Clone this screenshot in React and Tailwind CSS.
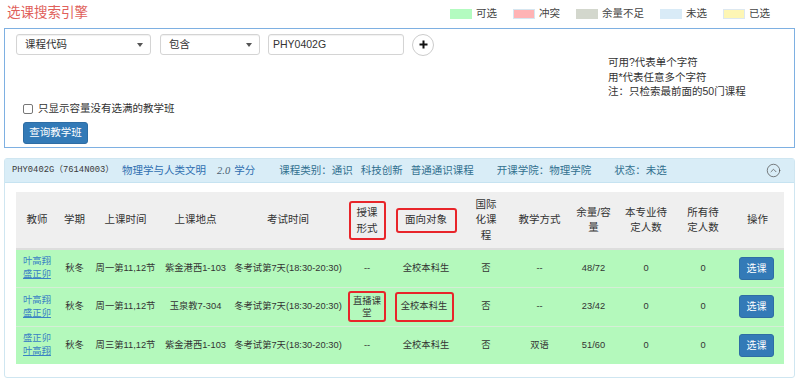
import React from "react";
import { CircleChevronUp } from "lucide-react";

const font = "font-['Liberation_Sans','Noto_Sans_CJK_SC',sans-serif]";

function Caret() {
  return (
    <svg width="6" height="4" viewBox="0 0 6 4" className="ml-auto">
      <path d="M0 0 L6 0 L3 4 Z" fill="#555" />
    </svg>
  );
}

function Legend({ color, label, first }) {
  return (
    <div className={`flex items-center ${first ? "" : "ml-[16px]"}`}>
      <span className={`w-[22px] h-[10px] ${color}`} />
      <span className="ml-[4px] text-[10.5px] text-[#444]">{label}</span>
    </div>
  );
}

const cols = [42, 33, 69, 71, 114, 44, 74, 46, 61, 47, 58, 56, 53];

function RedBox({ children, className }) {
  return (
    <div className={`inline-flex items-center justify-center border-2 border-[#e8252a] rounded-[3px] ${className}`}>
      {children}
    </div>
  );
}

const rows = [
  { t: ["叶高翔", "盛正卯"], time: "周一第11,12节", place: "紫金港西1-103", form: "--", method: "--", cap: "48/72" },
  { t: ["叶高翔", "盛正卯"], time: "周一第11,12节", place: "玉泉教7-304", form: "live", method: "--", cap: "23/42" },
  { t: ["盛正卯", "叶高翔"], time: "周三第11,12节", place: "紫金港西1-103", form: "--", method: "双语", cap: "51/60" },
];

export default function App() {
  return (
    <div className={`w-[799px] h-[383px] bg-white overflow-hidden text-[#333] ${font}`}>
      {/* top bar */}
      <div className="h-[28px] flex items-center">
        <div className="pl-[7px] text-[13.5px] text-[#e0605a] leading-none -mt-[3px]">选课搜索引擎</div>
        <div className="ml-auto pr-[29px] flex items-center">
          <Legend first color="bg-[#b3fbc0]" label="可选" />
          <Legend color="bg-[#ffb3b5] border border-[#d6e6f0]" label="冲突" />
          <Legend color="bg-[#d3d7cd]" label="余量不足" />
          <Legend color="bg-[#d9ebf7]" label="未选" />
          <Legend color="bg-[#fdf6b5] border border-[#dde8f0]" label="已选" />
        </div>
      </div>

      {/* search box */}
      <div className="mx-[4px] h-[120px] border border-[#7eb0e2] pt-[5px] pl-[11px] text-[10.5px]">
        <div className="flex items-center h-[21px]">
          <div className="w-[135px] h-[21px] border border-[#d4d4d4] rounded-[3px] flex items-center pl-[8px] pr-[7px] shadow-[inset_0_1px_1px_rgba(0,0,0,0.06)]">
            <span>课程代码</span>
            <Caret />
          </div>
          <div className="ml-[9px] w-[100px] h-[21px] border border-[#d4d4d4] rounded-[3px] flex items-center pl-[8px] pr-[7px] shadow-[inset_0_1px_1px_rgba(0,0,0,0.06)]">
            <span>包含</span>
            <Caret />
          </div>
          <div className="ml-[8px] w-[136px] h-[21px] border border-[#d4d4d4] rounded-[3px] flex items-center pl-[4px] shadow-[inset_0_1px_1px_rgba(0,0,0,0.06)]">
            PHY0402G
          </div>
          <div className="ml-[8px] w-[22px] h-[22px] rounded-full border border-[#cccccc] flex items-center justify-center">
            <svg width="9" height="9" viewBox="0 0 9 9">
              <path d="M4.5 0.5 V8.5 M0.5 4.5 H8.5" stroke="#111" strokeWidth="2" />
            </svg>
          </div>
        </div>
        <div className="pl-[592px] leading-[14.5px] text-[#333]">
          <div>可用?代表单个字符</div>
          <div>用*代表任意多个字符</div>
          <div>注：只检索最前面的50门课程</div>
        </div>
        <div className="ml-[7px] mt-[3px] h-[14px] flex items-center">
          <span className="w-[10px] h-[10px] border border-[#777] rounded-[2px] bg-white" />
          <span className="ml-[5px]">只显示容量没有选满的教学班</span>
        </div>
        <div className="ml-[7px] mt-[6px] w-[65px] h-[22px] rounded-[3px] bg-[#337ab7] border border-[#2e6da4] text-white flex items-center justify-center">
          查询教学班
        </div>
      </div>

      {/* course panel */}
      <div className="mx-[4px] mt-[10px] h-[220px] border border-[#cfe6f1] rounded-[3px]">
        <div className="h-[24px] bg-[#d9edf7] border-b border-[#c6e3f1] flex items-center pl-[7px] pr-[13px] text-[10.5px] text-[#31708f]">
          <span className="font-['Liberation_Mono','Noto_Sans_CJK_SC',monospace] text-[8.8px] text-[#3a3a3a]">PHY0402G（7614N003）</span>
          <span className="ml-[8px] text-[#2e6eb0]">物理学与人类文明</span>
          <span className="ml-[11px] italic font-['Liberation_Serif',serif] text-[#4b5d70]">2.0</span>
          <span className="ml-[4px] text-[#2e6eb0]">学分</span>
          <span className="ml-[24px]">课程类别：通识</span>
          <span className="ml-[8px]">科技创新</span>
          <span className="ml-[8px]">普通通识课程</span>
          <span className="ml-[23px]">开课学院：物理学院</span>
          <span className="ml-[23px]">状态：未选</span>
          <CircleChevronUp size={15} strokeWidth={1.2} color="#555" className="ml-auto" />
        </div>
        <div className="pt-[9px] px-[11px]">
          <table className="table-fixed w-[768px] border-collapse">
            <colgroup>
              {cols.map((w, i) => (
                <col key={i} style={{ width: w }} />
              ))}
            </colgroup>
            <thead>
              <tr className="h-[57px] bg-[#efefef] border-b-2 border-[#dddddd] text-[10.5px] leading-[15.5px] text-[#333]">
                <th className="font-normal text-center">教师</th>
                <th className="font-normal text-center">学期</th>
                <th className="font-normal text-center">上课时间</th>
                <th className="font-normal text-center">上课地点</th>
                <th className="font-normal text-center">考试时间</th>
                <th className="font-normal text-center">
                  <RedBox className="w-[37px] h-[39px] mt-[1px]">
                    授课<br />形式
                  </RedBox>
                </th>
                <th className="font-normal text-center">
                  <RedBox className="w-[61px] h-[25px]">面向对象</RedBox>
                </th>
                <th className="font-normal text-center">国际<br />化课<br />程</th>
                <th className="font-normal text-center">教学方式</th>
                <th className="font-normal text-center">余量/容<br />量</th>
                <th className="font-normal text-center">本专业待<br />定人数</th>
                <th className="font-normal text-center">所有待<br />定人数</th>
                <th className="font-normal text-center">操作</th>
              </tr>
            </thead>
            <tbody className="text-[9.3px] leading-[13px]">
              {rows.map((r, i) => (
                <tr key={i} className={`bg-[#b4f9bc] ${i === 1 ? "h-[39px]" : "h-[38px]"} ${i > 0 ? "border-t border-[#d5eed6]" : ""}`}>
                  <td className="text-center text-[#3a82c4]">
                    <div>{r.t[0]}</div>
                    <div className="underline">{r.t[1]}</div>
                  </td>
                  <td className="text-center">秋冬</td>
                  <td className="text-center">{r.time}</td>
                  <td className="text-center">{r.place}</td>
                  <td className="text-center">{r.exam || "冬考试第7天(18:30-20:30)"}</td>
                  <td className="text-center">
                    {r.form === "live" ? (
                      <RedBox className="w-[38px] h-[31px] leading-[12px]">
                        直播课<br />堂
                      </RedBox>
                    ) : (
                      "--"
                    )}
                  </td>
                  <td className="text-center">
                    {i === 1 ? <RedBox className="w-[59px] h-[30px] -ml-[4px]">全校本科生</RedBox> : "全校本科生"}
                  </td>
                  <td className="text-center">否</td>
                  <td className="text-center">{r.method}</td>
                  <td className="text-center">{r.cap}</td>
                  <td className="text-center">0</td>
                  <td className="text-center">0</td>
                  <td className="text-center">
                    <div className="inline-flex items-center justify-center w-[35px] h-[23px] rounded-[3px] bg-[#337ab7] border border-[#2e6da4] text-white text-[10px] ml-[-2px]">
                      选课
                    </div>
                  </td>
                </tr>
              ))}
            </tbody>
          </table>
        </div>
      </div>
    </div>
  );
}
